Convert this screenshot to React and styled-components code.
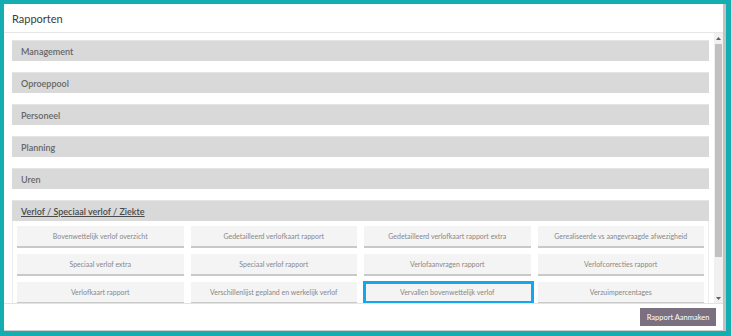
import React from 'react';
import styled, { createGlobalStyle } from 'styled-components';

const GlobalStyle = createGlobalStyle`
  html, body {
    margin: 0;
    padding: 0;
  }
  body {
    font-family: Lato, "Open Sans", "Liberation Sans", sans-serif;
  }
`;

const groups = ['Management', 'Oproeppool', 'Personeel', 'Planning', 'Uren'];

const reports = [
  'Bovenwettelijk verlof overzicht',
  'Gedetailleerd verlofkaart rapport',
  'Gedetailleerd verlofkaart rapport extra',
  'Gerealiseerde vs aangevraagde afwezigheid',
  'Speciaal verlof extra',
  'Speciaal verlof rapport',
  'Verlofaanvragen rapport',
  'Verlofcorrecties rapport',
  'Verlofkaart rapport',
  'Verschillenlijst gepland en werkelijk verlof',
  'Vervallen bovenwettelijk verlof',
  'Verzuimpercentages',
];

const App = () => {
  return (
    <>
      <GlobalStyle />
      <Frame>
        <Modal>
          <Header>Rapporten</Header>
          <Body>
            <Content>
              {groups.map(name => (
                <GroupHeader key={name}>{name}</GroupHeader>
              ))}
              <GroupHeader open>
                <span>Verlof / Speciaal verlof / Ziekte</span>
              </GroupHeader>
              <Panel>
                {reports.map(name => (
                  <ReportButton
                    key={name}
                    highlighted={name === 'Vervallen bovenwettelijk verlof'}
                  >
                    {name}
                  </ReportButton>
                ))}
              </Panel>
            </Content>
            <Scrollbar>
              <ScrollArrow>
                <svg width="5" height="3" viewBox="0 0 5 3">
                  <path d="M0 3 L2.5 0 L5 3 Z" fill="#606060" />
                </svg>
              </ScrollArrow>
              <ScrollTrack>
                <ScrollThumb />
              </ScrollTrack>
              <ScrollArrow>
                <svg width="5" height="3" viewBox="0 0 5 3">
                  <path d="M0 0 L2.5 3 L5 0 Z" fill="#606060" />
                </svg>
              </ScrollArrow>
            </Scrollbar>
          </Body>
          <Footer>
            <CreateButton>Rapport Aanmaken</CreateButton>
          </Footer>
        </Modal>
      </Frame>
    </>
  );
};

export default App;

const Frame = styled.div`
  width: 731px;
  height: 336px;
  box-sizing: border-box;
  padding: 4px 5px 5px 4px;
  background-color: #14adb1;
  display: flex;
`;

const Modal = styled.div`
  flex: 1;
  display: flex;
  flex-direction: column;
  background-color: #fff;
  border-right: 3px solid #c2c2c2;
  border-bottom: 1px solid #cfcfcf;
  overflow: hidden;
`;

const Header = styled.div`
  height: 29px;
  flex-shrink: 0;
  box-sizing: border-box;
  padding: 1px 8px 0;
  display: flex;
  align-items: center;
  border-bottom: 1px solid #e6e6e6;
  font-size: 11px;
  color: #3a3a3a;
`;

const Body = styled.div`
  height: 270px;
  flex-shrink: 0;
  display: flex;
`;

const Content = styled.div`
  flex: 1;
  overflow: hidden;
  padding: 7px 5px 0 8px;
`;

const Scrollbar = styled.div`
  width: 9px;
  display: flex;
  flex-direction: column;
  background-color: #f1f1f1;
`;

const ScrollArrow = styled.div`
  height: 10px;
  display: flex;
  align-items: center;
  justify-content: center;
`;

const ScrollTrack = styled.div`
  flex: 1;
  padding-top: 1px;
`;

const ScrollThumb = styled.div`
  height: 213px;
  margin: 0 1px;
  background-color: #c1c1c1;
`;

const GroupHeader = styled.div`
  height: 21px;
  box-sizing: border-box;
  padding: 0 9px;
  display: flex;
  align-items: center;
  margin-bottom: ${p => (p.open ? '0' : '11px')};
  background-color: #d9d9d9;
  border-top: 1px solid #e4e4e4;
  font-size: 9px;
  font-weight: 600;
  color: ${p => (p.open ? '#4a4a4a' : '#666')};

  span {
    text-decoration: underline;
  }
`;

const Panel = styled.div`
  display: grid;
  grid-template-columns: repeat(4, 1fr);
  column-gap: 7px;
  row-gap: 6px;
  padding: 5px 4px 4px;
  border: 1px solid #ececec;
  border-top: none;
  box-sizing: border-box;
`;

const ReportButton = styled.div`
  position: relative;
  height: 22px;
  box-sizing: border-box;
  display: flex;
  align-items: center;
  justify-content: center;
  background-color: #f4f4f4;
  border-bottom: 2px solid #c9c9c9;
  font-size: 7px;
  color: #888;
  white-space: nowrap;

  ${p =>
    p.highlighted &&
    `
    &::after {
      content: '';
      position: absolute;
      top: -1px;
      left: -1px;
      right: -3px;
      bottom: -2px;
      border: 3px solid #14a6ef;
    }
  `}
`;

const Footer = styled.div`
  flex: 1;
  display: flex;
  align-items: center;
  justify-content: flex-end;
  padding: 0 7px;
  border-top: 1px solid #e3e3e3;
`;

const CreateButton = styled.button`
  width: 76px;
  height: 18px;
  padding: 0;
  border: none;
  background-color: #7a7080;
  color: #fff;
  font-family: inherit;
  font-size: 7.5px;
  cursor: pointer;
`;
